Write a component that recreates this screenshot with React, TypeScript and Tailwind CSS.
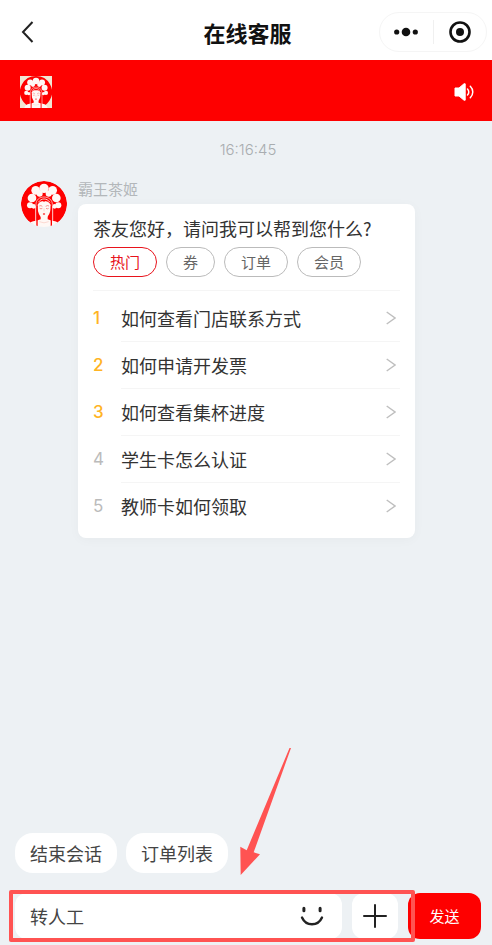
import { useState } from 'react';
import type { SVGProps } from 'react';
import clsx from 'clsx';

const tabs = ['热门', '券', '订单', '会员'];

const questions = [
  '如何查看门店联系方式',
  '如何申请开发票',
  '如何查看集杯进度',
  '学生卡怎么认证',
  '教师卡如何领取',
];

const quickActions = ['结束会话', '订单列表'];

/** 品牌头像 */
function BrandFigure(props: SVGProps<SVGSVGElement>) {
  return (
    <svg viewBox="0 0 138 138" aria-hidden="true" {...props}>
      <path d="M69 0a69 69 0 0 1 59 105c-8 12-14 17-21 22H31C24 122 17 116 10 105A69 69 0 0 1 69 0z" fill="#fe0000" />
      {/* 绒球 */}
      <g fill="#fff8f5">
        <circle cx="69" cy="22" r="14" />
        <circle cx="44" cy="28" r="13" />
        <circle cx="95" cy="28" r="13" />
        <circle cx="33" cy="51" r="13" />
        <circle cx="106" cy="51" r="13" />
        <circle cx="56" cy="38" r="9" />
        <circle cx="83" cy="38" r="9" />
        <circle cx="27" cy="73" r="9" />
        <circle cx="112" cy="73" r="9" />
        <circle cx="38" cy="76" r="7" />
        <circle cx="101" cy="76" r="7" />
      </g>
      {/* 头冠 */}
      <path d="M44 80V70c0-14 11-25 25-25s26 11 26 25v10z" fill="#fe0000" />
      <path d="M45 80V70c0-13 10-22 24-22s25 9 25 22v10" fill="none" stroke="#fff8f5" strokeWidth="2" />
      <path d="M52 64c5-7 10-10 17-10s13 3 18 10" fill="none" stroke="#fff8f5" strokeWidth="2.500" />
      {/* 肩颈 */}
      <path d="M19 138c4-14 13-17 27-19l13-4V98h21v17l13 4c14 2 22 5 26 19z" fill="#fff8f5" />
      <path d="M50 71c4-8 11-11 19-11s16 3 20 11c2 17-4 31-12 38-5 5-11 5-16 0-7-7-13-21-11-38z" fill="#fff8f5" />
      <path d="M48 74v64M91 74v64" stroke="#fe0000" strokeWidth="4" />
      <path d="M44 76v44M95 76v44" stroke="#fff8f5" strokeWidth="2.500" />
      {/* 五官 */}
      <path d="M55 75q5-3 9 1M74 76q5-4 10-1M56 82q4 3 8 0M75 82q4 3 8 0" fill="none" stroke="#f4625c" strokeWidth="2" />
      <path d="M69 82v9" stroke="#f9cdc4" strokeWidth="2" />
      <path d="M65 99q4-4 8 0q-4 5-8 0z" fill="#fe0000" />
      <circle cx="69" cy="59" r="3" fill="#fe0000" />
      <path d="M55 122q14 7 28 0" fill="none" stroke="#fbc8bf" strokeWidth="2" />
    </svg>
  );
}

function Header() {
  return (
    <header className="grid h-[60px] grid-cols-[1fr_auto_1fr] items-center bg-white pt-[3px] pr-[5px] pl-2">
      <button type="button" aria-label="返回" className="w-fit px-3">
        <svg width="14" height="22" viewBox="0 0 14 22" fill="none" stroke="#222" strokeWidth="2">
          <path d="M12.500 1 3 11l9.500 10" />
        </svg>
      </button>
      <h1 className="text-[22px] leading-8 font-bold text-[#111]">在线客服</h1>
      <div className="flex h-10 w-[108px] items-center justify-self-end rounded-full border border-[#f5f5f5]">
        <button type="button" aria-label="更多" className="flex flex-1 justify-center">
          <svg width="24" height="10" viewBox="0 0 24 10" fill="#111">
            <circle cx="2.700" cy="5" r="2.600" />
            <circle cx="12" cy="5" r="4.300" />
            <circle cx="21.300" cy="5" r="2.600" />
          </svg>
        </button>
        <span className="h-6 w-px bg-[#f0f0f0]" />
        <button type="button" aria-label="关闭" className="flex flex-1 justify-center">
          <svg width="22" height="22" viewBox="0 0 22 22">
            <circle cx="11" cy="11" r="9.500" fill="none" stroke="#111" strokeWidth="2.600" />
            <circle cx="11" cy="11" r="4" fill="#111" />
          </svg>
        </button>
      </div>
    </header>
  );
}

function BrandBar() {
  return (
    <div className="flex h-[61px] items-center justify-between bg-[#fe0000] pt-[2px] pr-[18px] pl-5">
      <BrandFigure className="size-8 bg-[#f1e6d3]" />
      <button type="button" aria-label="声音">
        <svg width="20" height="18" viewBox="0 0 20 18" fill="none" stroke="#fff">
          <path d="M1 5h4l5-4.200h1.200v16.400H10L5 13H1z" fill="#fff" strokeLinejoin="round" strokeWidth="1" />
          <path d="M13.500 6c1.700 1.700 1.700 4.300 0 6" strokeWidth="1.500" strokeLinecap="round" />
          <path d="M16.300 3.200c3.300 3.300 3.300 8.300 0 11.600" strokeWidth="1.500" strokeLinecap="round" />
        </svg>
      </button>
    </div>
  );
}

function QuestionCard() {
  const [active, setActive] = useState('热门');

  return (
    <section className="rounded-lg bg-white px-[15px] pt-[10px] pb-2 shadow-[0_2px_12px_rgba(0,0,0,0.03)]">
      <p className="text-lg leading-7 text-[#333]">茶友您好，请问我可以帮到您什么?</p>
      <div className="mt-[5px] flex gap-[9px]">
        {tabs.map((tab) => (
          <button
            key={tab}
            type="button"
            onClick={() => setActive(tab)}
            className={clsx(
              'h-[30px] rounded-full border px-4 text-[15px] leading-7',
              tab === active ? 'border-[#e8131c] text-[#e8131c]' : 'border-[#bbb] text-[#666]'
            )}
          >
            {tab}
          </button>
        ))}
      </div>
      <ol className="mt-[13px] border-t border-[#f5f5f5] pt-1">
        {questions.map((question, index) => (
          <li key={question}>
            <button type="button" className="flex h-[47px] w-full items-center text-left">
              <span
                className={clsx(
                  "w-7 font-['Inter',sans-serif] text-[17px]",
                  index < 3 ? 'font-medium text-[#ffb424]' : 'text-[#bbb]'
                )}
              >
                {index + 1}
              </span>
              <span
                className={clsx(
                  'flex h-full flex-1 items-center justify-between border-b pr-1 text-lg text-[#333]',
                  index < questions.length - 1 ? 'border-[#f5f5f5]' : 'border-transparent'
                )}
              >
                {question}
                <svg width="10" height="14" viewBox="0 0 10 14" fill="none" stroke="#bfbfbf" strokeWidth="1.400">
                  <path d="M.7 1 9 7 .7 13" />
                </svg>
              </span>
            </button>
          </li>
        ))}
      </ol>
    </section>
  );
}

function Composer() {
  const [text, setText] = useState('转人工');

  return (
    <form className="relative flex gap-[10px] pr-[11px] pl-[15px]" onSubmit={(e) => e.preventDefault()}>
      <div className="flex h-[46px] min-w-0 flex-1 items-center rounded-xl bg-white pr-[18px] pl-[15px]">
        <input
          aria-label="消息"
          value={text}
          onChange={(e) => setText(e.target.value)}
          className="min-w-0 flex-1 text-lg text-[#444] outline-none"
        />
        <button type="button" aria-label="表情">
          <svg width="24" height="22" viewBox="0 0 24 22" fill="none" stroke="#222" strokeLinecap="round">
            <path d="M3.900 3.200v2.600M20.100 3.200v2.600" strokeWidth="3" />
            <path d="M2 12.500c4 9 16 9 20 0" strokeWidth="2.400" />
          </svg>
        </button>
      </div>
      <button type="button" aria-label="添加" className="flex size-[46px] items-center justify-center rounded-xl bg-white">
        <svg width="24" height="24" viewBox="0 0 24 24" stroke="#222" strokeWidth="2" strokeLinecap="round">
          <path d="M12 1v22M1 12h22" />
        </svg>
      </button>
      <button type="submit" className="h-[46px] w-[73px] rounded-xl bg-[#fe0000] text-[15px] text-white">
        发送
      </button>

      {/* 操作指引：红框和箭头 */}
      <div className="pointer-events-none absolute -inset-y-[3px] right-[77px] left-[9px] rounded-xs border-4 border-[#ff5352]" />
      <svg
        className="pointer-events-none absolute bottom-[64px] left-[240px]"
        width="51"
        height="127"
        viewBox="0 0 51 127"
        fill="#ff5352"
        aria-hidden="true"
      >
        <path d="M.7 127 .3 98.700 6.700 102.300 49.500 0H51L13.700 104.300 20 106.300z" />
      </svg>
    </form>
  );
}

export default function App() {
  return (
    <div className="flex min-h-screen flex-col bg-[#edf1f4] font-['Noto_Sans_CJK_SC',sans-serif]">
      <Header />
      <BrandBar />
      <main className="flex-1 pt-[19px] pr-[77px] pl-[21px]">
        <time className="block pl-[60px] text-center font-['Inter',sans-serif] text-[15px] leading-5 font-light text-[#a9adb0]">
          16:16:45
        </time>
        <div className="mt-[19px] flex gap-[11px]">
          <BrandFigure className="mt-[2px] size-[46px] shrink-0 rounded-full" />
          <div className="min-w-0 flex-1">
            <p className="mb-[5px] text-[15px] leading-5 text-[#b3b7ba]">霸王茶姬</p>
            <QuestionCard />
          </div>
        </div>
      </main>
      <footer className="pb-[6px]">
        <div className="mb-5 flex gap-[9px] px-[15px]">
          {quickActions.map((action) => (
            <button key={action} type="button" className="h-10 rounded-[18px] bg-white px-[15px] text-lg text-[#444]">
              {action}
            </button>
          ))}
        </div>
        <Composer />
      </footer>
    </div>
  );
}
